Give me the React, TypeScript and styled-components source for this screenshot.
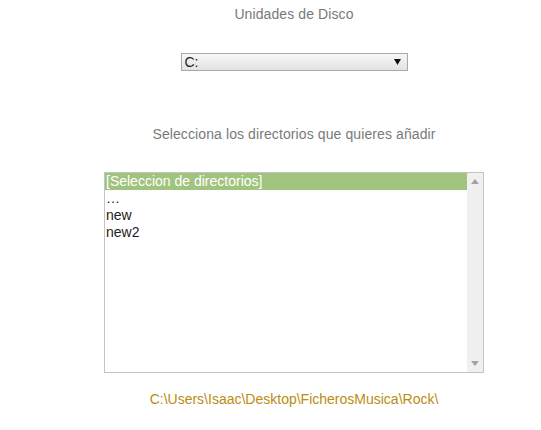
import React from "react";
import styled, { createGlobalStyle } from "styled-components";

const Global = createGlobalStyle`
  html, body { margin: 0; padding: 0; background: #fff; }
  body { font-family: "Liberation Sans", Arial, sans-serif; }
`;

const Page = styled.div`
  width: 541px;
  box-sizing: border-box;
  padding-left: 47px;
  display: flex;
  flex-direction: column;
  align-items: center;
`;

const Title = styled.div<{ $top: number }>`
  margin-top: ${(p) => p.$top}px;
  font-size: 14px;
  line-height: 17px;
  letter-spacing: 0.1px;
  color: #7a7a7a;
  white-space: nowrap;
`;

const SelectBox = styled.div`
  margin-top: 30px;
  width: 227px;
  height: 18px;
  box-sizing: border-box;
  border: 1px solid #a9a9a9;
  background: linear-gradient(#f7f7f7, #e3e3e3);
  display: flex;
  align-items: center;
  justify-content: space-between;
  padding: 0 6px 0 3px;
  font-size: 14px;
  color: #222;
`;

const Caret = styled.svg`
  width: 7px;
  height: 6px;
`;

const ListBox = styled.div`
  margin-top: 29px;
  width: 380px;
  height: 201px;
  box-sizing: border-box;
  border: 1px solid #c4c4c4;
  display: flex;
`;

const Items = styled.div`
  flex: 1;
  display: flex;
  flex-direction: column;
`;

const Item = styled.div<{ $selected?: boolean }>`
  height: 17px;
  line-height: 17px;
  padding-left: 1px;
  font-size: 14px;
  color: ${(p) => (p.$selected ? "#fff" : "#222")};
  background: ${(p) => (p.$selected ? "#a0c47e" : "transparent")};
  white-space: nowrap;
`;

const Scrollbar = styled.div`
  width: 16px;
  background: #f0f0f0;
  display: flex;
  flex-direction: column;
  justify-content: space-between;
  align-items: center;
  padding: 6px 0;
`;

const Arrow = styled.svg`
  width: 8px;
  height: 5px;
`;

const Path = styled.div`
  margin-top: 18px;
  font-size: 14px;
  line-height: 17px;
  color: #bc8b12;
  white-space: nowrap;
`;

export default function App() {
  return (
    <>
      <Global />
      <Page>
        <Title $top={6}>Unidades de Disco</Title>
        <SelectBox>
          <span>C:</span>
          <Caret viewBox="0 0 7 6">
            <path d="M0 0 H7 L3.5 6 Z" fill="#111" />
          </Caret>
        </SelectBox>
        <Title $top={55}>Selecciona los directorios que quieres añadir</Title>
        <ListBox>
          <Items>
            <Item $selected>[Seleccion de directorios]</Item>
            <Item>…</Item>
            <Item>new</Item>
            <Item>new2</Item>
          </Items>
          <Scrollbar>
            <Arrow viewBox="0 0 8 5">
              <path d="M0 5 L4 0 L8 5 Z" fill="#a3a3a3" />
            </Arrow>
            <Arrow viewBox="0 0 8 5">
              <path d="M0 0 L8 0 L4 5 Z" fill="#a3a3a3" />
            </Arrow>
          </Scrollbar>
        </ListBox>
        <Path>C:\Users\Isaac\Desktop\FicherosMusica\Rock\</Path>
      </Page>
    </>
  );
}
